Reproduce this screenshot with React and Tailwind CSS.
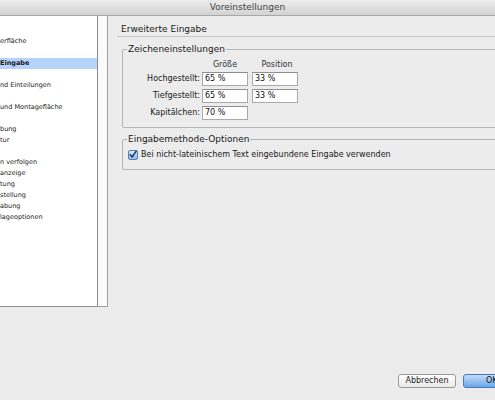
import React from "react";

const font = { fontFamily: '"Lucida Grande", "DejaVu Sans", "Noto Sans", sans-serif' };

const items = [
  { text: "" },
  { text: "erfläche" },
  { text: "" },
  { text: "Eingabe", selected: true },
  { text: "" },
  { text: "nd Einteilungen" },
  { text: "" },
  { text: "und Montagefläche" },
  { text: "" },
  { text: "bung" },
  { text: "tur" },
  { text: "" },
  { text: "n verfolgen" },
  { text: "anzeige" },
  { text: "tung" },
  { text: "stellung" },
  { text: "abung" },
  { text: "lageoptionen" },
];

function Field({ value }) {
  return (
    <div className="h-[14px] w-[46px] bg-white border border-[#a9a9a9] border-t-[#8e8e8e] pl-[2px] text-[8px] leading-[12px] text-[#111]">
      {value}
    </div>
  );
}

function Group({ label, className, children }) {
  return (
    <div className={`relative border border-[#b4b4b4] rounded-[2px] ${className}`}>
      <span className="absolute -top-[7px] left-[4px] px-[1px] bg-[#ececec] text-[9px] leading-[12px] text-[#1a1a1a]">
        {label}
      </span>
      {children}
    </div>
  );
}

export default function App() {
  return (
    <div
      className="w-[495px] h-[400px] bg-[#ececec] flex flex-col overflow-hidden text-[#1a1a1a]"
      style={font}
    >
      {/* title bar */}
      <div className="h-[16px] shrink-0 bg-gradient-to-b from-[#ececec] to-[#d3d3d3] border-b border-[#a8a8a8] flex items-center justify-center text-[9px] text-[#444]">
        Voreinstellungen
      </div>

      <div className="flex flex-1">
        {/* left list */}
        <div className="flex h-[291px] shrink-0">
          <div className="w-[98px] bg-white border-r border-b border-[#8c8c8c] pt-[9px]">
            {items.map((it, i) => (
              <div
                key={i}
                className={`h-[11px] text-[6.5px] leading-[11px] whitespace-nowrap ${
                  it.selected ? "bg-[#b5d3fb] font-bold" : ""
                }`}
              >
                {it.text}
              </div>
            ))}
          </div>
          <div className="w-[10px] bg-[#fafafa] border-r border-b border-[#a0a0a0]" />
        </div>

        {/* right panel */}
        <div className="flex-1 pl-[9px]">
          <div className="h-[21px] border-b border-[#c6c6c6] pl-[4px] pt-[8px] text-[9px] leading-[11px]">
            Erweiterte Eingabe
          </div>

          <Group label="Zeicheneinstellungen" className="mt-[12px] ml-[5px] w-[390px] h-[79px]">
            <div className="pt-[9px] pl-[1px]">
              <div className="flex h-[12px] items-center text-[8px] font-medium text-[#333]">
                <div className="w-[76px]" />
                <div className="w-[50px] text-center">Größe</div>
                <div className="w-[50px] text-center ml-[2px]">Position</div>
              </div>
              <div className="flex flex-col gap-[3px] mt-[1px]">
                <div className="flex items-center">
                  <div className="w-[76px] text-right text-[8px]">Hochgestellt:</div>
                  <div className="ml-[2px]"><Field value="65 %" /></div>
                  <div className="ml-[4px]"><Field value="33 %" /></div>
                </div>
                <div className="flex items-center">
                  <div className="w-[76px] text-right text-[8px]">Tiefgestellt:</div>
                  <div className="ml-[2px]"><Field value="65 %" /></div>
                  <div className="ml-[4px]"><Field value="33 %" /></div>
                </div>
                <div className="flex items-center">
                  <div className="w-[76px] text-right text-[8px]">Kapitälchen:</div>
                  <div className="ml-[2px]"><Field value="70 %" /></div>
                </div>
              </div>
            </div>
          </Group>

          <Group label="Eingabemethode-Optionen" className="mt-[11px] ml-[5px] w-[390px] h-[31px]">
            <div className="flex items-center pt-[9px] pl-[5px] gap-[3px]">
              <div className="w-[10px] h-[10px] rounded-[2px] border border-[#5a7fb0] bg-gradient-to-b from-[#d6e8fb] to-[#8fb9ea] flex items-center justify-center">
                <svg width="9" height="9" viewBox="0 0 10 10">
                  <path d="M1.5 5.2 L4 8 L9 0.8" fill="none" stroke="#1b2f4f" strokeWidth="1.8" strokeLinecap="round" strokeLinejoin="round" />
                </svg>
              </div>
              <span className="text-[8px] leading-[11px]">
                Bei nicht-lateinischem Text eingebundene Eingabe verwenden
              </span>
            </div>
          </Group>
        </div>
      </div>

      {/* footer buttons */}
      <div className="h-[14px] shrink-0 flex items-start pl-[398px] gap-[7px] mb-[12px]">
        <button className="h-[14px] w-[58px] shrink-0 rounded-[3px] border border-[#9a9a9a] bg-gradient-to-b from-white to-[#e9e9e9] text-[8px] leading-[12px] font-medium text-[#222]">
          Abbrechen
        </button>
        <button className="h-[14px] w-[64px] shrink-0 rounded-[3px] border border-[#4a78b8] bg-gradient-to-b from-[#c3dcfa] to-[#6aa6ea] text-[8px] leading-[12px] font-medium text-[#111] text-left pl-[22px]">
          OK
        </button>
      </div>
    </div>
  );
}
